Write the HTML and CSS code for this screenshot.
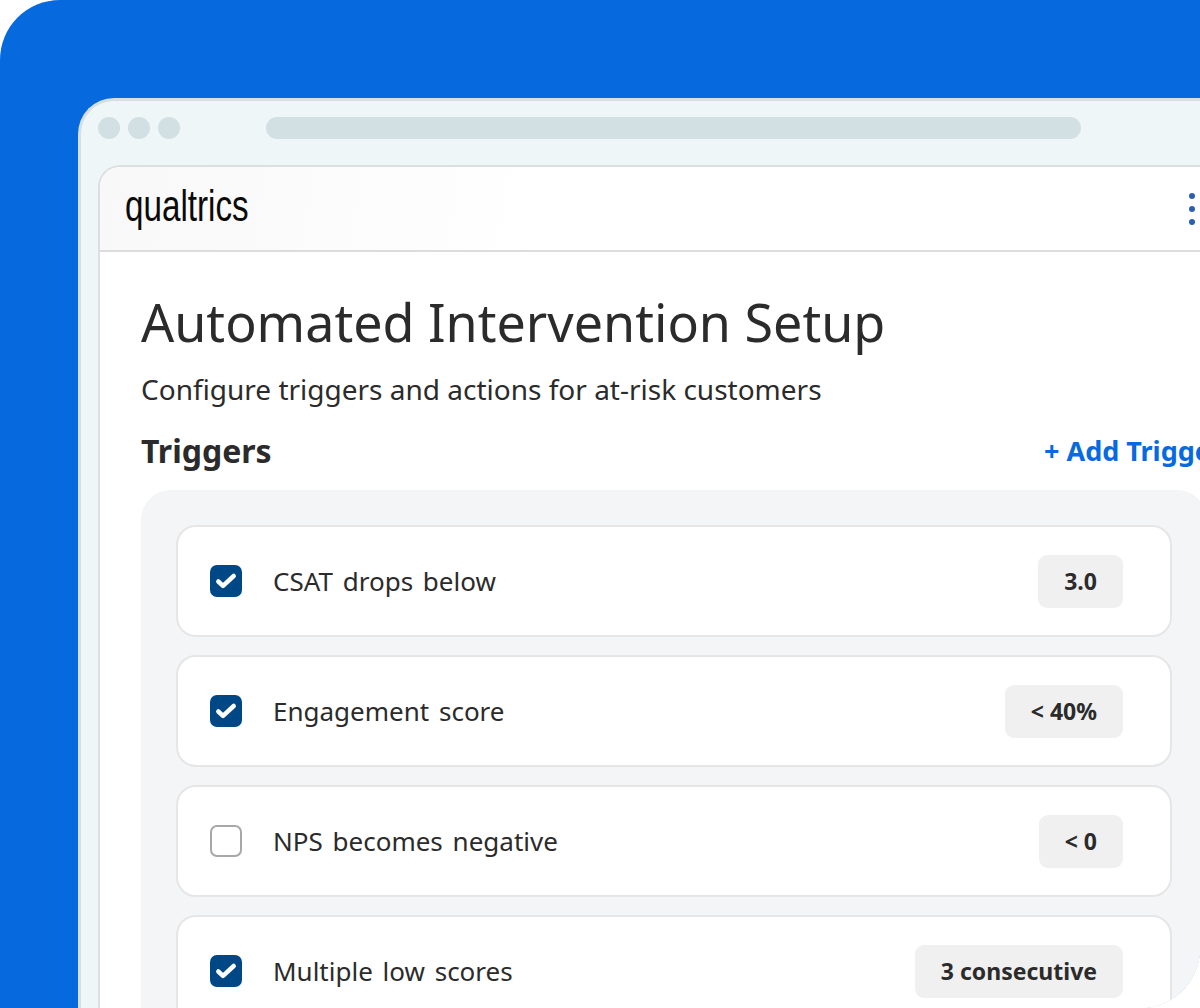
FILE: index.html
```html
<!DOCTYPE html>
<html lang="en">
<head>
    <meta charset="UTF-8">
    <meta name="viewport" content="width=device-width, initial-scale=1.0">
    <title>Automated Intervention Setup</title>
    <link rel="stylesheet" href="styles.css">
</head>
<body>

    <div class="stage">
        <div class="window">

            <!-- Browser chrome -->
            <div class="chrome">
                <span class="dot"></span>
                <span class="dot"></span>
                <span class="dot"></span>
                <span class="url-bar"></span>
            </div>

            <div class="app">
                <!-- App header -->
                <header class="app-header">
                    <span class="logo">qualtrics</span>
                    <span class="menu">
                        <span class="menu-dot"></span>
                        <span class="menu-dot"></span>
                        <span class="menu-dot"></span>
                    </span>
                </header>

                <main class="content">
                    <h1>Automated Intervention Setup</h1>
                    <p class="subtitle">Configure triggers and actions for at-risk customers</p>

                    <div class="section-head">
                        <h2>Triggers</h2>
                        <a class="add-link">+ Add Trigger</a>
                    </div>

                    <!-- Trigger list -->
                    <div class="panel">
                        <div class="trigger">
                            <span class="check checked">
                                <svg viewBox="0 0 32 32" width="32" height="32"><path d="M8.3 16.5l4.7 4.3 10.7-9.8" fill="none" stroke="#fff" stroke-width="4.5" stroke-linecap="round" stroke-linejoin="round"/></svg>
                            </span>
                            <span class="trigger-label">CSAT drops below</span>
                            <span class="chip">3.0</span>
                        </div>
                        <div class="trigger">
                            <span class="check checked">
                                <svg viewBox="0 0 32 32" width="32" height="32"><path d="M8.3 16.5l4.7 4.3 10.7-9.8" fill="none" stroke="#fff" stroke-width="4.5" stroke-linecap="round" stroke-linejoin="round"/></svg>
                            </span>
                            <span class="trigger-label">Engagement score</span>
                            <span class="chip">&lt; 40%</span>
                        </div>
                        <div class="trigger">
                            <span class="check"></span>
                            <span class="trigger-label">NPS becomes negative</span>
                            <span class="chip">&lt; 0</span>
                        </div>
                        <div class="trigger">
                            <span class="check checked">
                                <svg viewBox="0 0 32 32" width="32" height="32"><path d="M8.3 16.5l4.7 4.3 10.7-9.8" fill="none" stroke="#fff" stroke-width="4.5" stroke-linecap="round" stroke-linejoin="round"/></svg>
                            </span>
                            <span class="trigger-label">Multiple low scores</span>
                            <span class="chip">3 consecutive</span>
                        </div>
                    </div>
                </main>
            </div>
        </div>
    </div>

</body>
</html>
```

FILE: styles.css
```css
/* General styling */
html, body {
    margin: 0;
    height: 100%;
    background: #fff;
}

body {
    font-family: "Noto Sans", Arial, sans-serif;
    color: #2b2b2b;
    overflow: hidden;
}

/* Blue backdrop */
.stage {
    width: 1200px;
    height: 1008px;
    box-sizing: border-box;
    padding: 98px 0 0 78px;
    background: #066ade;
    border-radius: 60px 0 60px 0;
    overflow: hidden;
}

/* Browser window */
.window {
    width: 1200px;
    height: 1000px;
    box-sizing: border-box;
    background: #eef6f8;
    border: 3px solid #d6dfe2;
    border-right: 0;
    border-bottom: 0;
    border-top-left-radius: 36px;
    padding: 0 0 0 17px;
}

.chrome {
    display: flex;
    align-items: flex-start;
    gap: 8px;
    height: 64px;
    padding-top: 16px;
    box-sizing: border-box;
}

.dot {
    width: 22px;
    height: 22px;
    border-radius: 50%;
    background: #d2e0e4;
}

.url-bar {
    width: 815px;
    height: 22px;
    margin-left: 78px;
    border-radius: 11px;
    background: #d2e0e4;
}

/* App area */
.app {
    height: 900px;
    background: #fff;
    border: 2px solid #dcdfe0;
    border-right: 0;
    border-bottom: 0;
    border-top-left-radius: 22px;
}

.app-header {
    display: flex;
    align-items: center;
    justify-content: space-between;
    height: 83px;
    padding: 0 6px 0 25px;
    border-bottom: 2px solid #dcdcdc;
    border-top-left-radius: 20px;
    background: linear-gradient(100deg, #f8f8f9 0%, #fff 38%);
}

.logo {
    display: inline-block;
    margin-top: -6px;
    font-family: "Liberation Sans", Arial, sans-serif;
    font-size: 44px;
    color: #0a0a0a;
    transform: scaleX(0.755);
    transform-origin: left center;
}

.menu {
    display: flex;
    flex-direction: column;
    gap: 7px;
    margin-right: 77px;
}

.menu-dot {
    width: 6px;
    height: 6px;
    border-radius: 50%;
    background: #2b5fb3;
}

/* Main content */
.content {
    padding: 0 0 0 41px;
}

h1 {
    margin: 37px 0 0;
    font-size: 52px;
    line-height: 66px;
    font-weight: 400;
}

.subtitle {
    margin: 16px 0 0;
    font-size: 28px;
    line-height: 36px;
}

.section-head {
    display: flex;
    justify-content: space-between;
    align-items: center;
    width: 1082px;
    height: 44px;
    margin-top: 21px;
}

h2 {
    margin: 0;
    font-size: 32px;
    font-weight: 700;
}

.add-link {
    font-size: 27px;
    font-weight: 700;
    color: #076ae0;
    white-space: nowrap;
}

/* Trigger panel */
.panel {
    display: flex;
    flex-direction: column;
    gap: 18px;
    width: 1066px;
    box-sizing: border-box;
    margin-top: 18px;
    padding: 35px;
    background: #f4f5f7;
    border-radius: 30px;
}

.trigger {
    display: flex;
    align-items: center;
    height: 112px;
    box-sizing: border-box;
    padding: 0 47px 0 32px;
    background: #fff;
    border: 2px solid #e6e6e7;
    border-radius: 20px;
}

.check {
    width: 32px;
    height: 32px;
    box-sizing: border-box;
    flex-shrink: 0;
    border: 2px solid #a8a8a8;
    border-radius: 7px;
    background: #fff;
}

.check.checked {
    border: 0;
    background: #004785;
}

.check svg {
    display: block;
}

.trigger-label {
    margin-left: 31px;
    font-size: 26px;
    word-spacing: 3px;
}

.chip {
    margin-left: auto;
    padding: 0 26px;
    height: 53px;
    line-height: 53px;
    font-size: 23px;
    font-weight: 700;
    background: #f0f0f0;
    border-radius: 9px;
}
```
